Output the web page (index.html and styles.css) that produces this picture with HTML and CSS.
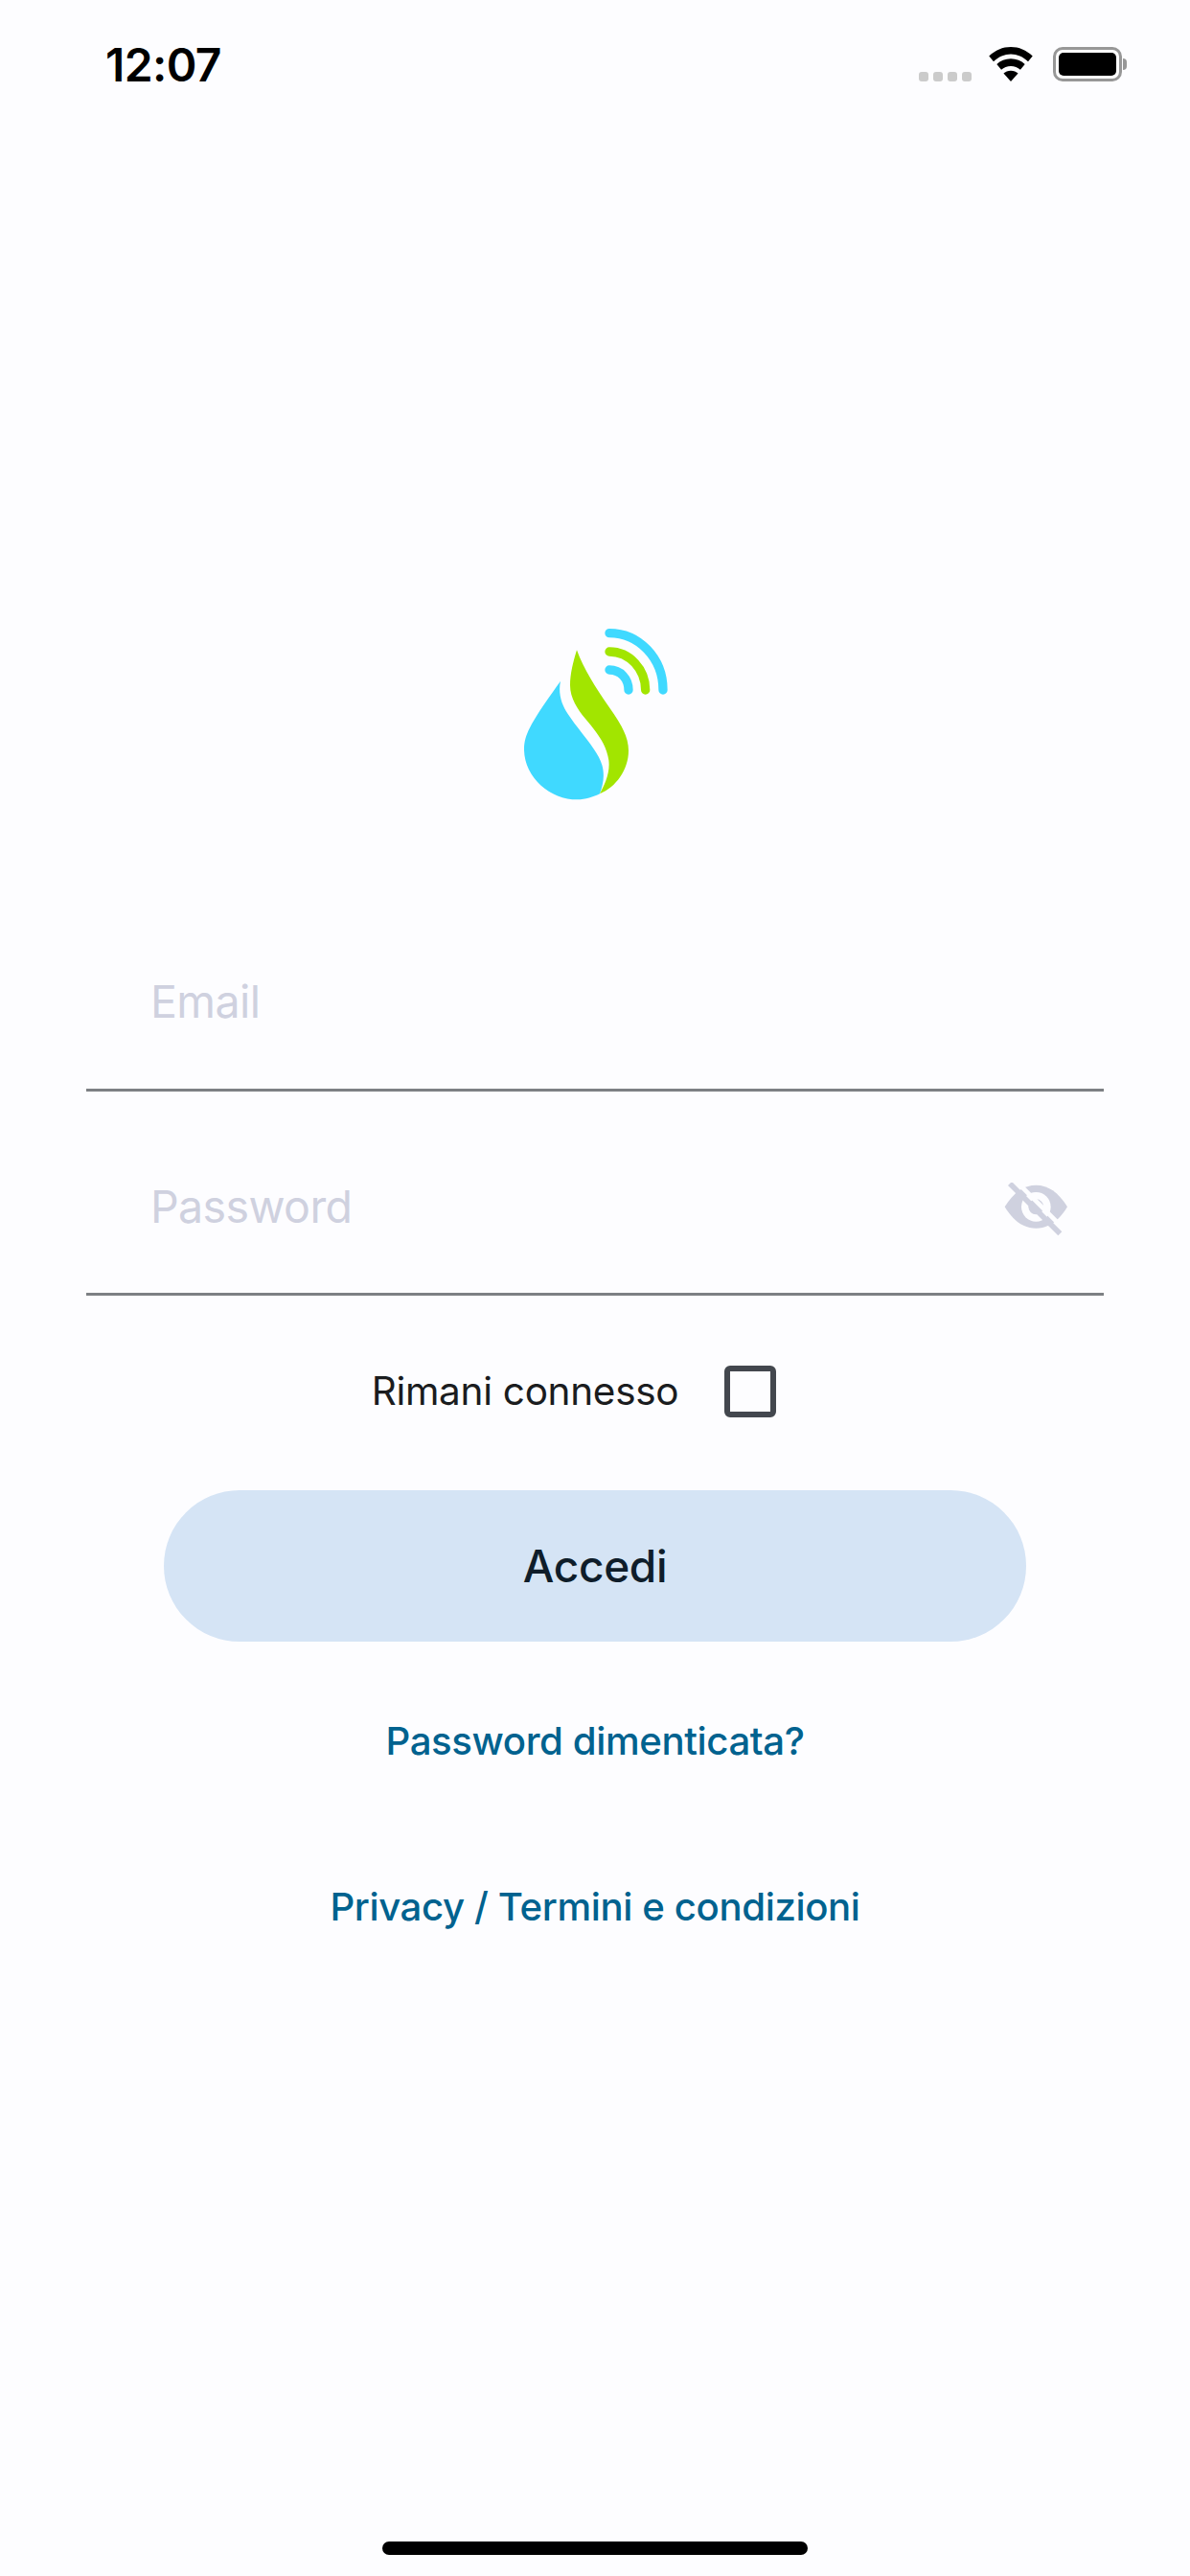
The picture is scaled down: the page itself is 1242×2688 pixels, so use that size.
FILE: index.html
```html
<!DOCTYPE html>
<html lang="it">
<head>
<meta charset="utf-8">
<title>Accedi</title>
<link rel="stylesheet" href="styles.css">
</head>
<body>
<div class="screen">
  <header class="status">
    <span class="time">12:07</span>
    <div class="status-icons">
      <div class="dots"><i></i><i></i><i></i><i></i></div>
      <svg class="wifi" viewBox="0 0 48 38"><path d="M24 0C15 0 7 3.500 0 10l5 6c5.500-5 12-8 19-8s13.500 3 19 8l5-6C41 3.500 33 0 24 0z"/><path d="M24 13c-6 0-11.500 2.200-15.500 6l5 6c2.800-2.600 6.500-4 10.500-4s7.700 1.400 10.500 4l5-6c-4-3.800-9.500-6-15.500-6z"/><path d="M24 26c-3.200 0-6 1.200-8 3l8 9 8-9c-2-1.800-4.800-3-8-3z"/></svg>
      <div class="battery"><div class="battery-body"><div class="battery-fill"></div></div><div class="battery-cap"></div></div>
    </div>
  </header>

  <div class="logo-wrap">
    <svg class="logo" viewBox="0 0 600 630">
      <path class="blue" d="M192 212C160 258 118 312 92 366C80 392 78 410 78 428C80 515 160 583 245 583C270 583 295 575 315 565C324 540 332 510 322 475C310 430 255 375 215 315C195 285 184 250 192 212Z"/>
      <path class="green" d="M243 115C232 150 222 190 222 225C222 265 245 300 270 330C300 367 335 405 343 460C348 500 330 535 315 565C365 545 405 490 405 430C405 385 380 345 345 295C300 230 265 175 243 115Z"/>
      <g class="arcs">
        <path d="M345 62C437 62 513 140 513 240"/>
        <path class="arc-green" d="M345 120C408 120 458 175 458 240"/>
        <path d="M345 177C380 177 405 205 405 240"/>
      </g>
    </svg>
  </div>

  <form class="form">
    <div class="field field-email"><span class="placeholder">Email</span></div>
    <div class="field field-password">
      <span class="placeholder">Password</span>
      <svg class="eye" viewBox="260 100 204 168">
        <path class="eye-shape" d="M262 176C290 130 322 108 360 108C398 108 430 130 458 176C430 222 398 243 360 243C322 243 290 222 262 176Z"/>
        <circle class="eye-hole" cx="360" cy="176" r="46"/>
        <circle class="eye-shape" cx="360" cy="176" r="24"/>
        <path class="eye-gap" d="M292 90L449 247"/>
        <path class="eye-slash" d="M278 103L435 260"/>
      </svg>
    </div>
    <div class="remember">
      <span class="remember-label">Rimani connesso</span>
      <span class="checkbox"></span>
    </div>
    <button class="primary" type="button">Accedi</button>
    <a class="link link-forgot">Password dimenticata?</a>
    <a class="link link-privacy">Privacy / Termini e condizioni</a>
  </form>

  <div class="home-indicator"></div>
</div>
</body>
</html>
```
FILE: styles.css
```css
* { box-sizing: border-box; }
html, body { margin: 0; padding: 0; }
body { background: #fdfdff; font-family: "Inter", "Noto Sans", sans-serif; }
.screen { width: 1242px; height: 2688px; display: flex; flex-direction: column; position: relative; overflow: hidden; background: #fdfdff; }

.status { height: 132px; padding: 44px 66px 0 110px; display: flex; justify-content: space-between; align-items: flex-start; }
.time { font-family: "Inter", sans-serif; font-weight: 600; font-size: 48px; line-height: 48px; color: #000; letter-spacing: -.6px; }
.status-icons { display: flex; align-items: flex-end; margin-top: 5px; height: 36px; }
.dots { display: flex; gap: 5px; margin-right: 17px; }
.dots i { width: 10px; height: 10px; border-radius: 3px; background: #cbcbcb; }
.wifi { width: 48px; height: 36px; fill: #000; margin-right: 20px; }
.battery { display: flex; align-items: center; height: 36px; }
.battery-body { width: 72px; height: 36px; border: 3px solid #979797; border-radius: 10px; padding: 3px; background: #fff; }
.battery-fill { width: 100%; height: 100%; background: #000; border-radius: 5px; }
.battery-cap { width: 4px; height: 12px; background: #979797; border-radius: 0 4px 4px 0; margin-left: 1px; }

.logo-wrap { display: flex; justify-content: center; margin-top: 508px; }
.logo { width: 200px; height: 210px; display: block; margin-left: -1px; }
.blue { fill: #40d9ff; }
.green { fill: #a2e500; }
.arcs { fill: none; stroke: #40d9ff; stroke-width: 28; stroke-linecap: round; }
.arc-green { stroke: #a2e500; }

.form { display: flex; flex-direction: column; align-items: center; margin-top: 139px; }
.field { width: 1062px; height: 150px; border-bottom: 3px solid #7d8084; padding-left: 67px; display: flex; align-items: flex-start; position: relative; }
.field-email { height: 150px; padding-top: 28px; }
.field-password { height: 213px; padding-top: 92px; }
.placeholder { font-size: 46.500px; line-height: 56px; letter-spacing: -.6px; color: #cfd1df; }
.eye { position: absolute; right: 36px; top: 95px; width: 68px; height: 56px; }
.eye-shape { fill: #cfd1df; }
.eye-hole { fill: #fdfdff; }
.eye-gap { stroke: #fdfdff; stroke-width: 14; fill: none; }
.eye-slash { stroke: #cfd1df; stroke-width: 17; fill: none; }

.remember { display: flex; align-items: center; margin-top: 72px; height: 56px; gap: 48px; padding-right: 44px; }
.remember-label { font-size: 40.500px; line-height: 56px; letter-spacing: -.3px; color: #1a1c1e; }
.checkbox { width: 54px; height: 54px; border: 6px solid #43474e; border-radius: 6px; }

.primary { width: 900px; height: 158px; margin-top: 75px; border: 0; border-radius: 79px; background: #d5e4f5; color: #0f1d2a; font-family: inherit; font-size: 46px; font-weight: 500; letter-spacing: -.3px; }
.link { font-size: 40.200px; line-height: 56px; letter-spacing: -.4px; color: #00628f; font-weight: 500; display: block; }
.link-forgot { margin-top: 76px; }
.link-privacy { margin-top: 117px; }

.home-indicator { position: absolute; left: 399px; top: 2652px; width: 444px; height: 14px; border-radius: 7px; background: #000; }
```
